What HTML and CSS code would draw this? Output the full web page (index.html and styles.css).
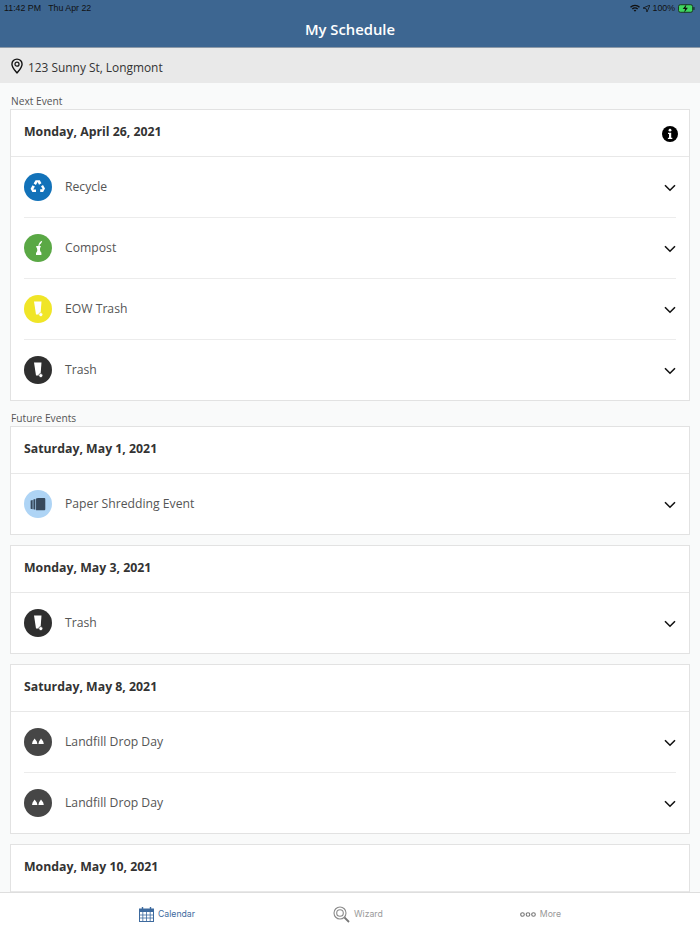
FILE: index.html
```html
<!DOCTYPE html>
<html lang="en">
<head>
    <meta charset="UTF-8">
    <meta name="viewport" content="width=device-width, initial-scale=1.0">
    <title>My Schedule</title>
    <link rel="stylesheet" href="styles.css">
</head>
<body>
    <svg class="sprites" width="0" height="0">
        <symbol id="chevron" viewBox="0 0 12 8"><path d="M1 1.200l5 5 5-5" fill="none" stroke="#111" stroke-width="1.600"/></symbol>
        <symbol id="cart" viewBox="0 0 28 28">
            <path d="M10 6.500h7.500l-1 13h-4.500z" fill="#fff"/>
            <circle cx="16.800" cy="19.600" r="2" fill="#fff" stroke="currentColor" stroke-width=".7"/>
        </symbol>
        <symbol id="landfill" viewBox="0 0 28 28">
            <path d="M8 16l.6-2.600 2-2.900 2.200 2.900.6 2.600zM14.400 16l.6-2.600 2-2.900 2.200 2.900.6 2.600z" fill="#fff"/>
        </symbol>
    </svg>

    <header class="topbar">
        <div class="status">
            <span>11:42 PM&nbsp;&nbsp; Thu Apr 22</span>
            <span class="status-right">
                <svg width="10" height="8" viewBox="0 0 12 9"><path d="M0 3a8.500 8.500 0 0 1 12 0l-1.200 1.200a6.800 6.800 0 0 0-9.600 0zM2.200 5.200a5.400 5.400 0 0 1 7.600 0L8.600 6.400a3.700 3.700 0 0 0-5.200 0zM4.400 7.300a2.300 2.300 0 0 1 3.200 0L6 9z" fill="#111"/></svg>
                <svg width="7" height="7" viewBox="0 0 8 8"><path d="M8 0L0 3.500l3.700.8.800 3.700z" fill="none" stroke="#111" stroke-width=".9"/></svg>
                <span>100%</span>
                <svg width="17" height="9" viewBox="0 0 18 9"><rect x=".5" y=".5" width="15" height="8" rx="2" fill="#3fd660" stroke="#16321c"/><rect x="16.200" y="3" width="1.300" height="3" fill="#16321c"/><path d="M9 0L5 5h2.500L6.500 9l4-5.200H8z" fill="#111"/></svg>
            </span>
        </div>
        <h1 class="title">My Schedule</h1>
    </header>

    <div class="address">
        <svg width="12" height="16" viewBox="0 0 13 17"><path d="M6.500 1A5.500 5.500 0 0 0 1 6.500C1 10 4.500 13.500 6.500 16c2-2.500 5.500-6 5.500-9.500A5.500 5.500 0 0 0 6.500 1z" fill="none" stroke="#111" stroke-width="1.500"/><circle cx="6.500" cy="6.500" r="2.200" fill="none" stroke="#111" stroke-width="1.300"/></svg>
        <span class="address-text">123 Sunny St, Longmont</span>
    </div>

    <main class="content">
        <div class="section-label">Next Event</div>
        <section class="card">
            <div class="card-date">
                <span>Monday, April 26, 2021</span>
                <svg class="info" width="16" height="16" viewBox="0 0 16 16"><circle cx="8" cy="8" r="8" fill="#000"/><circle cx="8" cy="4.200" r="1.400" fill="#fff"/><path d="M6 6.800h3.200v5H10.300v1.200H5.900v-1.200H7V8H6z" fill="#fff"/></svg>
            </div>
            <div class="event">
                <span class="badge badge-recycle">
                    <svg width="18" height="18" viewBox="0 0 18 18"><path d="M6.600 2.300h4.200l1.700 3-2.500 1.400L8.600 4 6.900 6.900 4.600 5.600zM14 7l2 3.600-1.900 3.300h-2.900v-2.700h2.500L12 8.300zM3.500 7.200l2.400 1.400-1.700 2.800H7v2.600H3.400L1.600 10.800z" fill="#fff"/></svg>
                </span>
                <span class="event-name">Recycle</span>
                <svg class="chevron" width="12" height="8"><use href="#chevron"/></svg>
            </div>
            <div class="event">
                <span class="badge badge-compost">
                    <svg width="18" height="20" viewBox="0 0 18 20"><path d="M13.200 2.800C13 4.500 12 6 10.600 6.800V8H12c-.7 1.500-1.200 2.500-1 4 .2 1.500 1 2 1.400 2.800V17H7v-2c.8-1 1.400-2 1.300-3-.1-1.500-.5-2-1.100-3V8h2.200c.1-2.500 1.600-4.400 3.800-5.200z" fill="#fff"/></svg>
                </span>
                <span class="event-name">Compost</span>
                <svg class="chevron" width="12" height="8"><use href="#chevron"/></svg>
            </div>
            <div class="event">
                <span class="badge badge-eow"><svg width="28" height="28"><use href="#cart"/></svg></span>
                <span class="event-name">EOW Trash</span>
                <svg class="chevron" width="12" height="8"><use href="#chevron"/></svg>
            </div>
            <div class="event">
                <span class="badge badge-trash"><svg width="28" height="28"><use href="#cart"/></svg></span>
                <span class="event-name">Trash</span>
                <svg class="chevron" width="12" height="8"><use href="#chevron"/></svg>
            </div>
        </section>

        <div class="section-label section-label-future">Future Events</div>
        <section class="card">
            <div class="card-date"><span>Saturday, May 1, 2021</span></div>
            <div class="event">
                <span class="badge badge-paper">
                    <svg width="16" height="14" viewBox="0 0 18 14"><path d="M.7 3.200L3 2.500V13l-2.300-.6zM3.800 2L6 1.300V13.600L3.800 13zM6.800.9L9 .3h7.200c.6 0 1 .4 1 1V13c0 .6-.4 1-1 1H6.800z" fill="#36485c"/></svg>
                </span>
                <span class="event-name">Paper Shredding Event</span>
                <svg class="chevron" width="12" height="8"><use href="#chevron"/></svg>
            </div>
        </section>

        <section class="card">
            <div class="card-date"><span>Monday, May 3, 2021</span></div>
            <div class="event">
                <span class="badge badge-trash"><svg width="28" height="28"><use href="#cart"/></svg></span>
                <span class="event-name">Trash</span>
                <svg class="chevron" width="12" height="8"><use href="#chevron"/></svg>
            </div>
        </section>

        <section class="card">
            <div class="card-date"><span>Saturday, May 8, 2021</span></div>
            <div class="event">
                <span class="badge badge-landfill"><svg width="28" height="28"><use href="#landfill"/></svg></span>
                <span class="event-name">Landfill Drop Day</span>
                <svg class="chevron" width="12" height="8"><use href="#chevron"/></svg>
            </div>
            <div class="event">
                <span class="badge badge-landfill"><svg width="28" height="28"><use href="#landfill"/></svg></span>
                <span class="event-name">Landfill Drop Day</span>
                <svg class="chevron" width="12" height="8"><use href="#chevron"/></svg>
            </div>
        </section>

        <section class="card">
            <div class="card-date"><span>Monday, May 10, 2021</span></div>
        </section>
    </main>

    <nav class="tabbar">
        <div class="tab tab-active">
            <svg width="15" height="15" viewBox="0 0 15 15"><rect x=".5" y="2" width="14" height="12.500" fill="none" stroke="#3d6a9e"/><rect x=".5" y="2" width="14" height="3" fill="#3d6a9e"/><path d="M3.500 0v3M11.500 0v3" stroke="#3d6a9e" stroke-width="1.400"/><path d="M.5 8h14M.5 11h14M3.800 5v9.500M7.500 5v9.500M11.200 5v9.500" stroke="#3d6a9e" stroke-width=".8"/></svg>
            <span>Calendar</span>
        </div>
        <div class="tab">
            <svg width="17" height="17" viewBox="0 0 17 17"><circle cx="7" cy="7" r="6" fill="none" stroke="#8a8a8a" stroke-width="1.100"/><circle cx="7" cy="7" r="3.300" fill="none" stroke="#8a8a8a" stroke-width="1.100"/><path d="M11.500 11.500l4.500 4.500" stroke="#777" stroke-width="1.800"/></svg>
            <span>Wizard</span>
        </div>
        <div class="tab">
            <svg width="16" height="5" viewBox="0 0 16 5"><circle cx="2.500" cy="2.500" r="1.800" fill="none" stroke="#777" stroke-width="1.100"/><circle cx="8" cy="2.500" r="1.800" fill="none" stroke="#777" stroke-width="1.100"/><circle cx="13.500" cy="2.500" r="1.800" fill="none" stroke="#777" stroke-width="1.100"/></svg>
            <span>More</span>
        </div>
    </nav>
</body>
</html>
```

FILE: styles.css
```css
html, body {
    margin: 0;
    padding: 0;
    height: 100%;
}

body {
    font-family: 'Open Sans', sans-serif;
    height: 934px;
    display: flex;
    flex-direction: column;
    overflow: hidden;
    background-color: #f9fafa;
    color: #444;
}

.sprites {
    position: absolute;
}

.topbar {
    background: #3d6691;
    height: 48px;
    flex: none;
    box-sizing: border-box;
    border-bottom: 1px solid #8d9aa8;
}

.status {
    display: flex;
    justify-content: space-between;
    align-items: center;
    height: 14px;
    padding: 1px 5px 0 4px;
    font-family: 'Liberation Sans', sans-serif;
    font-size: 8.800px;
    color: #111;
}

.status-right {
    display: flex;
    align-items: center;
    gap: 3px;
    color: #111;
}

.title {
    margin: 1px 0 0;
    text-align: center;
    color: white;
    font-size: 14.800px;
    font-weight: 600;
    line-height: 26px;
}

.address {
    flex: none;
    height: 35px;
    background: #e9e9e9;
    display: flex;
    align-items: center;
    gap: 5px;
    padding-left: 11px;
    font-size: 11.900px;
    color: #333;
}

.address-text {
    margin-top: 3px;
}

.content {
    flex: 1;
    min-height: 0;
    overflow: hidden;
    padding: 0 10px;
}

.section-label {
    font-size: 10.200px;
    line-height: 14px;
    color: #555;
    padding: 11px 0 1px 1px;
}

.section-label-future {
    padding: 0 0 1px 1px;
}

.card {
    background: white;
    border: 1px solid #e2e2e2;
    margin-bottom: 10px;
}

.card-date {
    height: 46px;
    display: flex;
    justify-content: space-between;
    align-items: center;
    padding: 0 11px 0 13px;
    border-bottom: 1px solid #e8e8e8;
    font-size: 12.300px;
    font-weight: 700;
    color: #333;
}

.card-date span {
    margin-top: -4px;
}

.info {
    margin-top: 1px;
}

.event {
    height: 60px;
    margin: 0 13px;
    display: flex;
    align-items: center;
    border-bottom: 1px solid #ececec;
}

.event:last-child {
    border-bottom: none;
}

.badge {
    width: 28px;
    height: 28px;
    border-radius: 50%;
    flex: none;
    display: flex;
    align-items: center;
    justify-content: center;
}

.badge-recycle { background: #1272b9; }
.badge-compost { background: #5aa845; }
.badge-eow { background: #f0e527; color: #f0e527; }
.badge-trash { background: #2f2f2f; color: #2f2f2f; }
.badge-paper { background: #aed4f5; }
.badge-landfill { background: #464646; }

.event-name {
    flex: 1;
    margin-left: 13px;
    margin-top: -2px;
    font-size: 12.200px;
    color: #555;
}

.chevron {
    margin-top: 2px;
    flex: none;
}

.tabbar {
    flex: none;
    height: 40px;
    padding-top: 1px;
    background: white;
    border-top: 1px solid #dedede;
    display: flex;
}

.tab {
    display: flex;
    align-items: center;
    gap: 4px;
    font-family: 'Inter', sans-serif;
    font-size: 8.700px;
    color: #999;
}

.tab:nth-child(1) {
    margin-left: 139px;
}

.tab:nth-child(2) {
    margin-left: 138px;
}

.tab:nth-child(3) {
    margin-left: 137px;
}

.tab-active {
    color: #3d6a9e;
}
```
